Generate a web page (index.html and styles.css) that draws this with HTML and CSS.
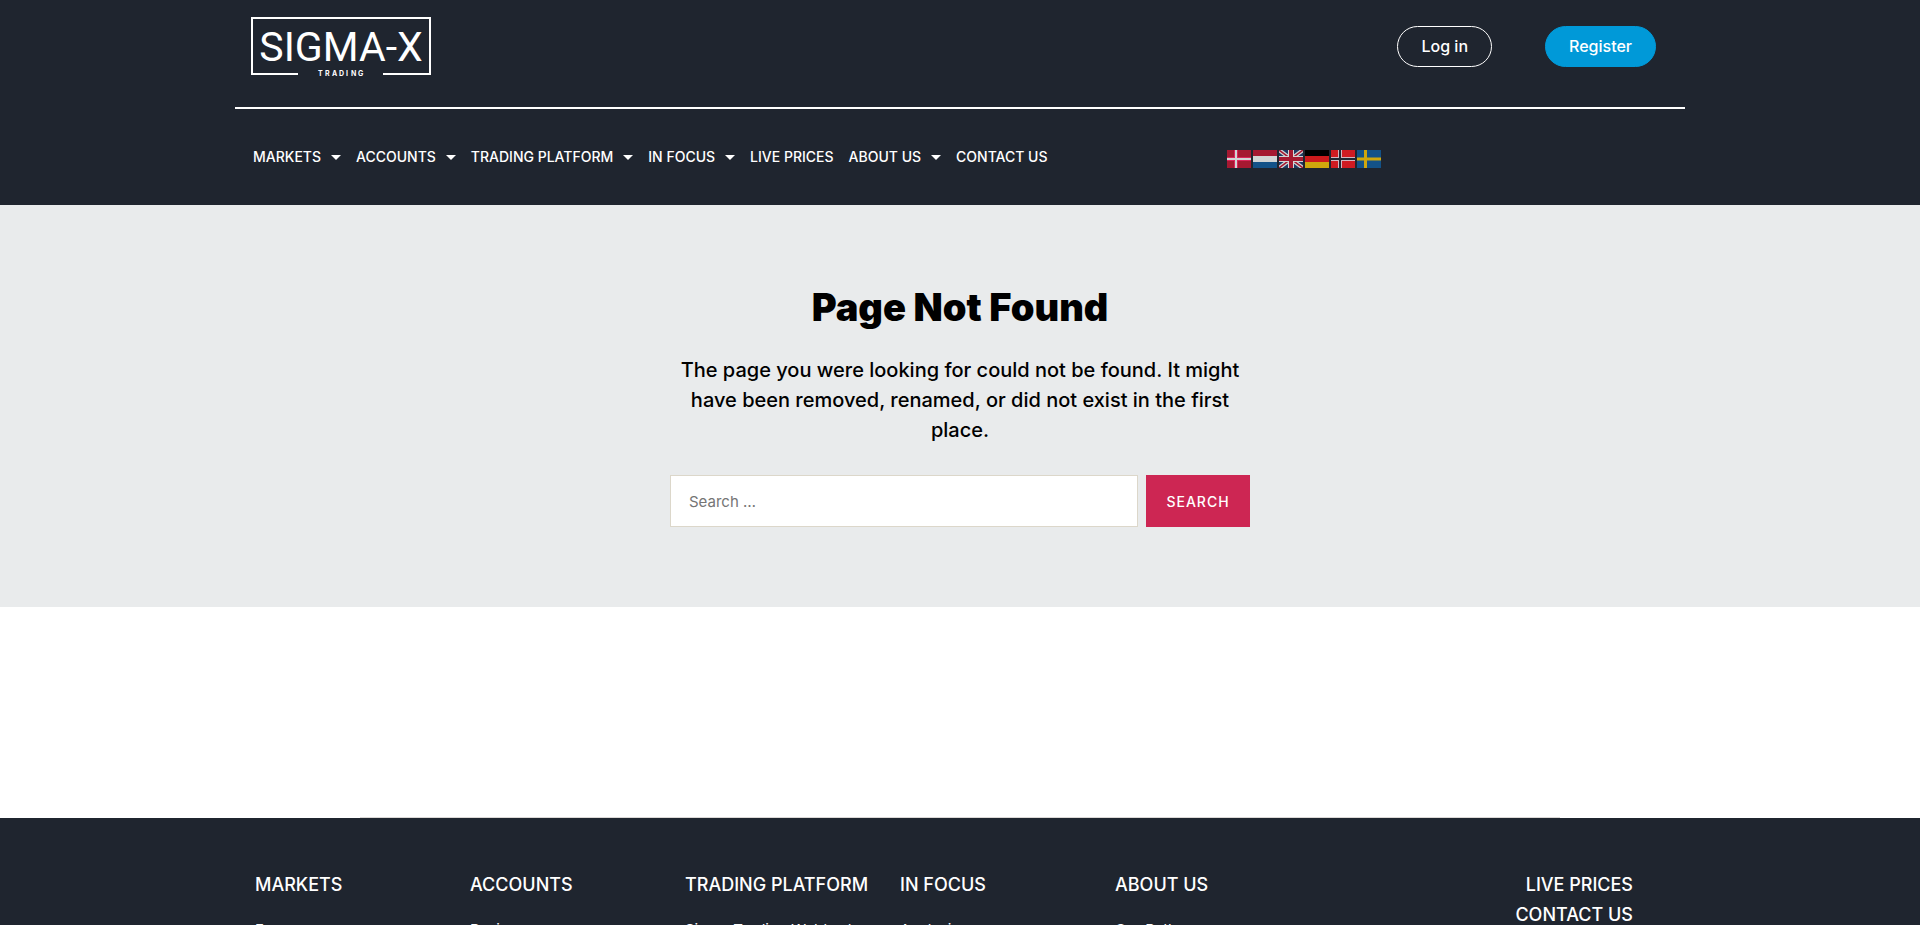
FILE: index.html
```html
<!DOCTYPE html>
<html lang="en">
<head>
  <meta charset="UTF-8">
  <meta name="viewport" content="width=device-width, initial-scale=1.0">
  <title>Page not found - Sigma-X Trading</title>
  <link rel="stylesheet" href="styles.css">
</head>
<body>
  <header class="site-header">
    <div class="container">
      <div class="header-top">
        <a class="logo" href="#" aria-label="Sigma-X Trading">
          <svg width="182" height="62" viewBox="0 0 182 62">
            <path d="M48 59H2V3H180V59H133" fill="none" stroke="#fff" stroke-width="2"/>
            <text class="logo-name" x="91" y="46" text-anchor="middle">SIGMA-X</text>
            <text class="logo-sub" x="68 75 82 89 96 101 108" y="61">TRADING</text>
          </svg>
        </a>
        <div class="account">
          <a class="btn btn-login" href="#">Log in</a>
          <a class="btn btn-register" href="#">Register</a>
        </div>
      </div>
      <div class="header-nav">
        <nav class="main-nav">
          <a href="#">MARKETS <span class="caret"></span></a>
          <a href="#">ACCOUNTS <span class="caret"></span></a>
          <a href="#">TRADING PLATFORM <span class="caret"></span></a>
          <a href="#">IN FOCUS <span class="caret"></span></a>
          <a href="#">LIVE PRICES</a>
          <a href="#">ABOUT US <span class="caret"></span></a>
          <a href="#">CONTACT US</a>
        </nav>
        <div class="flags">
          <a href="#" aria-label="Danish">
            <svg width="24" height="18" viewBox="0 0 24 18">
              <path fill="#a51931" d="M0 0h24v18H0z"/>
              <path stroke="#d9265a" stroke-width="4" d="M9 0v18M0 9h24"/>
              <path stroke="#d2d5d5" stroke-width="2" d="M9 0v18M0 9h24"/>
            </svg>
          </a>
          <a href="#" aria-label="Dutch">
            <svg width="24" height="18" viewBox="0 0 24 18">
              <path fill="#a51931" d="M0 0h24v6H0z"/>
              <path fill="#d2d5d5" d="M0 6h24v6H0z"/>
              <path fill="#135288" d="M0 12h24v6H0z"/>
            </svg>
          </a>
          <a href="#" aria-label="English">
            <svg width="24" height="18" viewBox="0 0 24 18">
              <path fill="#1f3a63" d="M0 0h24v18H0z"/>
              <path stroke="#d2d5d5" stroke-width="4" d="M0 0l24 18M24 0L0 18"/>
              <path stroke="#a51931" stroke-width="1.5" d="M0 0l24 18M24 0L0 18"/>
              <path stroke="#d2d5d5" stroke-width="6" d="M12 0v18M0 9h24"/>
              <path stroke="#a51931" stroke-width="4" d="M12 0v18M0 9h24"/>
            </svg>
          </a>
          <a href="#" aria-label="German">
            <svg width="24" height="18" viewBox="0 0 24 18">
              <path fill="#000" d="M0 0h24v6H0z"/>
              <path fill="#cc1a1c" d="M0 6h24v6H0z"/>
              <path fill="#cfa70d" d="M0 12h24v6H0z"/>
            </svg>
          </a>
          <a href="#" aria-label="Norwegian">
            <svg width="24" height="18" viewBox="0 0 24 18">
              <path fill="#cf1b22" d="M0 0h24v18H0z"/>
              <path stroke="#d2b5c0" stroke-width="4" d="M9 0v18M0 9h24"/>
              <path stroke="#1f2733" stroke-width="2" d="M9 0v18M0 9h24"/>
            </svg>
          </a>
          <a href="#" aria-label="Swedish">
            <svg width="24" height="18" viewBox="0 0 24 18">
              <path fill="#135288" d="M0 0h24v18H0z"/>
              <path stroke="#cfa70d" stroke-width="3" d="M8.5 0v18M0 9h24"/>
            </svg>
          </a>
        </div>
      </div>
    </div>
  </header>

  <main class="error-page">
    <div class="error-inner">
      <h1>Page Not Found</h1>
      <p>The page you were looking for could not be found. It might have been removed, renamed, or did not exist in the first place.</p>
      <form class="search-form" role="search">
        <input type="search" placeholder="Search …" aria-label="Search for">
        <button type="submit">SEARCH</button>
      </form>
    </div>
  </main>

  <hr class="separator">

  <footer class="site-footer">
    <div class="container footer-cols">
      <div>
        <h2>MARKETS</h2>
        <ul>
          <li><a href="#">Forex</a></li>
        </ul>
      </div>
      <div>
        <h2>ACCOUNTS</h2>
        <ul>
          <li><a href="#">Basic</a></li>
        </ul>
      </div>
      <div>
        <h2>TRADING PLATFORM</h2>
        <ul>
          <li><a href="#">Sigma Trading Webtrader</a></li>
        </ul>
      </div>
      <div>
        <h2>IN FOCUS</h2>
        <ul>
          <li><a href="#">Analysis</a></li>
        </ul>
      </div>
      <div>
        <h2>ABOUT US</h2>
        <ul>
          <li><a href="#">Our Path</a></li>
        </ul>
      </div>
      <div class="footer-links">
        <h2>LIVE PRICES</h2>
        <h2>CONTACT US</h2>
      </div>
    </div>
  </footer>
</body>
</html>
```
FILE: styles.css
```css
* {
  box-sizing: border-box;
}
body {
  margin: 0;
  background: #fff;
  color: #000;
  font-family: Inter, "Liberation Sans", sans-serif;
  overflow: hidden;
  height: 100vh;
}
a {
  color: inherit;
  text-decoration: none;
}
.container {
  max-width: 1450px;
  margin: 0 auto;
}
.site-header {
  background: #1f252f;
  color: #fff;
}

/* logo and account buttons */
.header-top {
  display: flex;
  justify-content: space-between;
  align-items: flex-start;
  height: 109px;
  padding: 15px 29px 0 15px;
  border-bottom: 2px solid #fff;
}
.logo svg {
  display: block;
}
.logo-name {
  fill: #fff;
  font-family: Roboto, sans-serif;
  font-size: 41px;
}
.logo-sub {
  fill: #fff;
  font-size: 7px;
  font-weight: 700;
}
.account {
  display: flex;
  gap: 53px;
  padding-top: 11px;
}
.btn {
  padding: 0 23px;
  border: 1px solid #fff;
  border-radius: 21px;
  font-size: 16px;
  font-weight: 500;
  line-height: 39px;
}
.btn-register {
  background: #0099d8;
  border-color: #0099d8;
}

/* menu and language flags */
.header-nav {
  display: flex;
  align-items: center;
  height: 96px;
  padding: 0 18px;
}
.main-nav {
  display: flex;
  flex: 0 0 974px;
  gap: 15px;
  font-size: 14px;
  font-weight: 500;
  line-height: 20px;
}
.main-nav a {
  display: flex;
  align-items: center;
  gap: 10px;
  white-space: nowrap;
}
.caret {
  border: 5px solid transparent;
  border-top-color: #fff;
  border-bottom: 0;
}
.flags {
  display: flex;
  gap: 2px;
  padding-top: 4px;
}
.flags svg {
  display: block;
}

/* 404 content */
.error-page {
  background: #e9ebec;
  padding: 80px 20px;
}
.error-inner {
  max-width: 580px;
  margin: 0 auto;
  text-align: center;
}
h1 {
  margin: 0 0 26px;
  font-size: 38px;
  font-weight: 900;
  line-height: 44px;
}
.error-inner p {
  margin: 0 0 30px;
  font-size: 20px;
  font-weight: 500;
  line-height: 30px;
}
.search-form {
  display: flex;
  gap: 8px;
}
.search-form input {
  flex: 1;
  min-width: 0;
  height: 52px;
  padding: 0 18px;
  border: 1px solid #dcd7ca;
  border-radius: 0;
  background: #fff;
  font-family: inherit;
  font-size: 15px;
}
.search-form input::placeholder {
  color: #757575;
}
.search-form button {
  width: 104px;
  border: 0;
  background: #cd2653;
  color: #fff;
  font-family: inherit;
  font-size: 14px;
  font-weight: 500;
  letter-spacing: 1px;
}
.separator {
  max-width: 1200px;
  margin: 210px auto 0;
  border: 0;
  border-top: 1px solid #dbd8d6;
}

/* footer */
.site-footer {
  background: #1f252f;
  color: #fff;
  padding: 52px 0 60px;
}
.footer-cols {
  display: grid;
  grid-template-columns: repeat(5, 215px) 1fr;
  padding: 0 52px 0 20px;
}
h2 {
  margin: 0;
  font-size: 18px;
  font-weight: 500;
  line-height: 30px;
  white-space: nowrap;
}
.footer-cols ul {
  list-style: none;
  margin: 18px 0 0;
  padding: 0;
  font-size: 15px;
  line-height: 24px;
}
.footer-links {
  text-align: right;
}
```
